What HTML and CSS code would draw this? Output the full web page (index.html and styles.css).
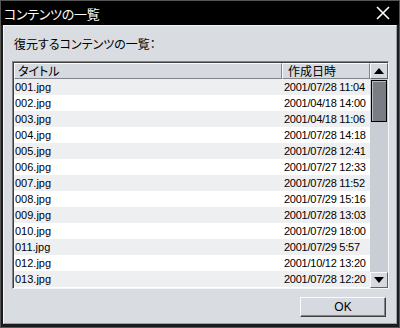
FILE: index.html
```html
<!DOCTYPE html>
<html lang="ja">
<head>
  <meta charset="UTF-8" />
  <title>コンテンツの一覧</title>
  <link rel="stylesheet" href="styles.css">
</head>
<body>
  <div class="window">
    <div class="titlebar">
      <span class="title">コンテンツの一覧</span>
      <svg class="close" width="14" height="14" viewBox="0 0 14 14">
        <path d="M1 1 L13 13 M13 1 L1 13" stroke="#fff" stroke-width="1.6" fill="none"/>
      </svg>
    </div>

    <div class="content">
      <div class="label">復元するコンテンツの一覧：</div>

      <div class="listbox">
        <div class="list">
          <div class="head">
            <div class="hcell name">タイトル</div>
            <div class="hcell date">作成日時</div>
          </div>
          <div class="row"><span class="name">001.jpg</span><span class="date">2001/07/28 11:04</span></div>
          <div class="row"><span class="name">002.jpg</span><span class="date">2001/04/18 14:00</span></div>
          <div class="row"><span class="name">003.jpg</span><span class="date">2001/04/18 11:06</span></div>
          <div class="row"><span class="name">004.jpg</span><span class="date">2001/07/28 14:18</span></div>
          <div class="row"><span class="name">005.jpg</span><span class="date">2001/07/28 12:41</span></div>
          <div class="row"><span class="name">006.jpg</span><span class="date">2001/07/27 12:33</span></div>
          <div class="row"><span class="name">007.jpg</span><span class="date">2001/07/28 11:52</span></div>
          <div class="row"><span class="name">008.jpg</span><span class="date">2001/07/29 15:16</span></div>
          <div class="row"><span class="name">009.jpg</span><span class="date">2001/07/28 13:03</span></div>
          <div class="row"><span class="name">010.jpg</span><span class="date">2001/07/29 18:00</span></div>
          <div class="row"><span class="name">011.jpg</span><span class="date">2001/07/29 5:57</span></div>
          <div class="row"><span class="name">012.jpg</span><span class="date">2001/10/12 13:20</span></div>
          <div class="row"><span class="name">013.jpg</span><span class="date">2001/07/28 12:20</span></div>
        </div>

        <div class="scrollbar">
          <div class="sbtn"><span class="arrow up"></span></div>
          <div class="track">
            <div class="thumb"></div>
          </div>
          <div class="sbtn"><span class="arrow down"></span></div>
        </div>
      </div>

      <div class="actions">
        <button class="ok">OK</button>
      </div>
    </div>
  </div>
</body>
</html>
```

FILE: styles.css
```css
* { box-sizing: border-box; margin: 0; padding: 0; }

body {
  width: 400px;
  height: 328px;
  overflow: hidden;
  font-family: "Noto Sans CJK JP", "Liberation Sans", sans-serif;
  font-size: 12px;
  font-feature-settings: "palt";
  color: #000;
}

.window {
  width: 400px;
  height: 328px;
  background: #1c1c1c;
  border: 1px solid #555;
  display: flex;
  flex-direction: column;
}

.titlebar {
  height: 25px;
  background: #000;
  color: #fff;
  display: flex;
  align-items: center;
  justify-content: space-between;
  padding: 0 9px 0 3px;
}

.title {
  font-size: 13px;
  letter-spacing: -0.3px;
}

.content {
  flex: 1;
  margin: 0 2px 3px 2px;
  background: #d9dde2;
  border: 1px solid #f4f6f8;
  border-right-color: #9aa0a8;
  border-bottom-color: #9aa0a8;
  display: flex;
  flex-direction: column;
  padding: 9px 7px 6px 8px;
}

.label {
  height: 18px;
  line-height: 18px;
  padding-left: 2px;
}

.listbox {
  margin-top: 8px;
  display: flex;
  border: 1px solid #808488;
  border-right-color: #f4f6f8;
  border-bottom-color: #f4f6f8;
  height: 228px;
}

.list {
  flex: 1;
  background: #fff;
  border-left: 1px solid #404040;
  border-top: 1px solid #404040;
  overflow: hidden;
}

.head {
  display: flex;
  height: 16px;
}

.hcell {
  background: #d6dae0;
  border: 1px solid #fafbfc;
  border-right-color: #80858c;
  border-bottom-color: #80858c;
  line-height: 13px;
  padding-left: 3px;
  white-space: nowrap;
}

.hcell.name { flex: 1; }
.hcell.date { width: 88px; padding-left: 5px; }

.row {
  display: flex;
  height: 16px;
  line-height: 16px;
  background: #eeeff1;
  font-family: "Liberation Sans", "Noto Sans CJK JP", sans-serif;
  font-size: 11px;
  white-space: nowrap;
}

.row:nth-child(odd) { background: #fff; }

.row .name { flex: 1; padding-left: 1px; }
.row .date { width: 88px; padding-left: 2px; letter-spacing: -0.25px; overflow: hidden; }

.scrollbar {
  width: 18px;
  display: flex;
  flex-direction: column;
  background: #c9cdd4;
  border-top: 1px solid #404040;
}

.sbtn {
  height: 16px;
  background: #d6dae0;
  border: 1px solid #fafbfc;
  border-right-color: #60646a;
  border-bottom-color: #60646a;
  display: flex;
  align-items: center;
  justify-content: center;
}

.arrow {
  width: 0;
  height: 0;
  border-left: 5px solid transparent;
  border-right: 5px solid transparent;
}

.arrow.up { border-bottom: 6px solid #000; }
.arrow.down { border-top: 6px solid #000; }

.track {
  flex: 1;
  padding: 1px 1px;
}

.thumb {
  height: 42px;
  background: #7a7e84;
  border: 1px solid #000;
  box-shadow: inset 1px 1px 0 #b8bcc2;
}

.actions {
  display: flex;
  justify-content: flex-end;
  margin-top: 8px;
}

.ok {
  width: 86px;
  height: 20px;
  font-family: "Liberation Sans", sans-serif;
  font-size: 12px;
  background: #d6dae0;
  border: 1px solid #fafbfc;
  border-right-color: #404040;
  border-bottom-color: #404040;
  box-shadow: inset -1px -1px 0 #80858c;
  margin-right: 3px;
}
```
